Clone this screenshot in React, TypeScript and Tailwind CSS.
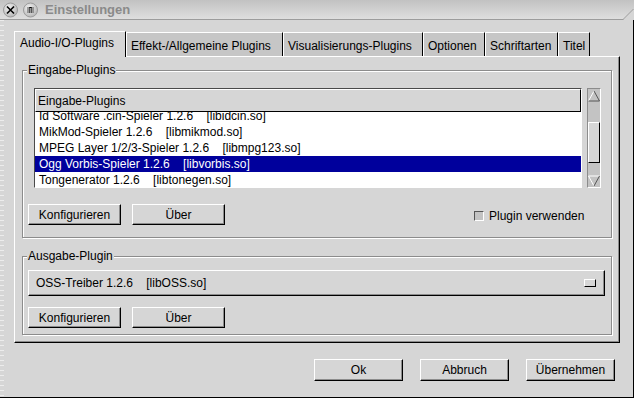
import React from "react";

const raised =
  "bg-[#d6d6d6] border-t border-l border-b border-r border-t-white border-l-white border-b-black border-r-black shadow-[inset_-1px_-1px_0_#8c8c8c]";

function Btn({ label, wide }: { label: string; wide?: boolean }) {
  return (
    <div
      className={
        (wide ? "w-[89px] h-[22px] " : "w-[93px] h-[21px] ") +
        raised +
        " flex items-center justify-center whitespace-pre"
      }
    >
      {label}
    </div>
  );
}

function Group({
  label,
  className,
  children,
}: {
  label: string;
  className: string;
  children: React.ReactNode;
}) {
  return (
    <div
      className={
        "relative w-[590px] border border-[#8c8c8c] shadow-[1px_1px_0_#ffffff,inset_1px_1px_0_#ffffff] " +
        className
      }
    >
      <span className="absolute left-[4px] top-[-8px] h-[14px] leading-[14px] bg-[#d6d6d6] px-px">
        {label}
      </span>
      {children}
    </div>
  );
}

const tabs = [
  { t: "Audio-I/O-Plugins", w: "w-[112px]", active: true },
  { t: "Effekt-/Allgemeine Plugins", w: "w-[157px]" },
  { t: "Visualisierungs-Plugins", w: "w-[140px]" },
  { t: "Optionen", w: "w-[62px]" },
  { t: "Schriftarten", w: "w-[73px]" },
  { t: "Titel", w: "w-[32px]" },
];

const rows = [
  { a: "Id Software .cin-Spieler 1.2.6", b: "[libidcin.so]" },
  { a: "MikMod-Spieler 1.2.6", b: "[libmikmod.so]" },
  { a: "MPEG Layer 1/2/3-Spieler 1.2.6", b: "[libmpg123.so]" },
  { a: "Ogg Vorbis-Spieler 1.2.6", b: "[libvorbis.so]", sel: true },
  { a: "Tongenerator 1.2.6", b: "[libtonegen.so]" },
];

export default function App() {
  return (
    <div className="w-[634px] h-[398px] bg-[#d6d6d6] flex flex-col font-['Liberation_Sans',Arial,sans-serif] text-[12px] leading-[14px] text-black overflow-hidden">
      {/* title bar */}
      <div className="relative h-[20px] flex items-center border-b border-[#9c9c9c] bg-gradient-to-b from-[#c2c2c2] to-[#dedede]">
        <svg width="40" height="19" viewBox="0 0 40 19" className="shrink-0">
          <defs>
            <radialGradient id="g" cx="0.4" cy="0.35" r="0.7">
              <stop offset="0" stopColor="#f2f2f2" />
              <stop offset="1" stopColor="#b4b4b4" />
            </radialGradient>
          </defs>
          <circle cx="10.5" cy="10" r="7" fill="url(#g)" stroke="#9a9a9a" />
          <path d="M7 6.5 L14 13.5 M14 6.5 L7 13.5" stroke="#000" strokeWidth="1.6" />
          <circle cx="30.5" cy="10" r="7" fill="url(#g)" stroke="#9a9a9a" />
          <rect x="27.5" y="7" width="6" height="6" fill="#555" />
          <path d="M28 8h1M30 8h1M32 8h1M28 10h1M30 10h1M32 10h1M28 12h1M30 12h1M32 12h1" stroke="#ddd" strokeWidth="1" />
          <rect x="29.5" y="7" width="2" height="1" fill="#000" />
        </svg>
        <span className="ml-[5px] text-[13px] font-bold text-[#8a8a8a]">Einstellungen</span>
        <svg
          width="11"
          height="11"
          viewBox="0 0 11 11"
          className="absolute right-0 bottom-[-1px]"
        >
          <polygon points="0,11 11,0 11,11" fill="#d6d6d6" />
          <line x1="0" y1="10.5" x2="10.5" y2="0" stroke="#9c9c9c" />
        </svg>
      </div>

      <div className="flex flex-1 border-r border-b border-black">
        <div className="w-[4px] bg-[repeating-linear-gradient(to_bottom,#ececec_0px,#ececec_1px,#d6d6d6_1px,#d6d6d6_5px)]" />
        <div className="flex-1 flex flex-col pl-[10px] pt-[11px]">
          {/* tabs */}
          <div className="flex h-[25px] items-start">
            {tabs.map((tb) =>
              tb.active ? (
                <div
                  key={tb.t}
                  className={
                    tb.w +
                    " relative z-10 h-[26px] bg-[#d6d6d6] border-t border-l border-r border-t-white border-l-white border-r-black pl-[5px] pt-[4px] whitespace-nowrap"
                  }
                >
                  {tb.t}
                </div>
              ) : (
                <div
                  key={tb.t}
                  className={
                    tb.w +
                    " mt-[1px] h-[24px] bg-[#c6c6c6] border-t border-l border-r border-t-white border-l-white border-r-black pl-[4px] pt-[6px] whitespace-nowrap overflow-hidden"
                  }
                >
                  {tb.t}
                </div>
              )
            )}
          </div>

          {/* panel */}
          <div className="w-[606px] h-[287px] border-t border-l border-b border-r border-t-white border-l-white border-b-black border-r-black shadow-[inset_-1px_-1px_0_#8c8c8c] pl-[7px] pt-[13px] flex flex-col">
            <Group label="Eingabe-Plugins" className="h-[168px] pl-[5px] pt-[17px]">
              <div className="flex h-[100px] ml-[6px] gap-[5px]">
                {/* list */}
                <div className="w-[548px] h-[100px] border-t border-l border-b border-r border-t-[#4a4a4a] border-l-[#4a4a4a] border-b-white border-r-white bg-white flex flex-col">
                  <div className="h-[23px] shrink-0 bg-[#d6d6d6] border-t border-l border-b border-r border-t-white border-l-white border-b-black border-r-black flex items-center pl-[2px]">
                    Eingabe-Plugins
                  </div>
                  <div className="h-[75px] overflow-hidden">
                    <div className="-mt-[4px]">
                      {rows.map((r) => (
                        <div
                          key={r.a}
                          className={
                            r.sel
                              ? "h-[16px] flex items-center pl-[4px] whitespace-pre bg-[#00009c] text-white"
                              : "h-[16px] flex items-center pl-[4px] whitespace-pre"
                          }
                        >
                          {r.a + "    " + r.b}
                        </div>
                      ))}
                    </div>
                  </div>
                </div>
                {/* scrollbar */}
                <div className="w-[14px] h-[100px] bg-[#c3c3c3] border-t border-l border-b border-r border-t-[#8c8c8c] border-l-[#8c8c8c] border-b-white border-r-white flex flex-col items-center">
                  <svg width="12" height="12" viewBox="0 0 12 12" className="mt-[1px]">
                    <line x1="0.5" y1="11" x2="6" y2="1" stroke="#ffffff" />
                    <line x1="6" y1="1" x2="11.5" y2="11" stroke="#555555" />
                    <line x1="0.5" y1="11" x2="11.5" y2="11" stroke="#555555" />
                  </svg>
                  <div className="mt-[20px] w-[12px] h-[41px] bg-[#d6d6d6] border-t border-l border-b border-r border-t-white border-l-white border-b-black border-r-black" />
                  <svg width="12" height="12" viewBox="0 0 12 12" className="mt-auto mb-[0px]">
                    <line x1="0.5" y1="1" x2="11.5" y2="1" stroke="#ffffff" />
                    <line x1="0.5" y1="1" x2="6" y2="11" stroke="#ffffff" />
                    <line x1="6" y1="11" x2="11.5" y2="1" stroke="#555555" />
                  </svg>
                </div>
              </div>
              <div className="flex items-center mt-[16px]">
                <Btn label="Konfigurieren" />
                <div className="w-[11px]" />
                <Btn label="Über" />
                <div className="ml-[249px] mt-[2px] flex items-center">
                  <div className="w-[10px] h-[10px] bg-[#c3c3c3] border-t border-l border-b border-r border-t-[#555555] border-l-[#555555] border-b-white border-r-white" />
                  <span className="ml-[5px]">Plugin verwenden</span>
                </div>
              </div>
            </Group>

            <Group label="Ausgabe-Plugin" className="mt-[18px] h-[79px] pl-[5px] pt-[13px]">
              <div className={"w-[577px] h-[26px] " + raised + " flex items-center pl-[7px] whitespace-pre"}>
                <span>{"OSS-Treiber 1.2.6    [libOSS.so]"}</span>
                <div className="ml-auto mr-[8px] w-[12px] h-[8px] bg-[#d6d6d6] border-t border-l border-b border-r border-t-white border-l-white border-b-black border-r-black" />
              </div>
              <div className="flex items-center mt-[11px]">
                <Btn label="Konfigurieren" />
                <div className="w-[11px]" />
                <Btn label="Über" />
              </div>
            </Group>
          </div>

          {/* bottom buttons */}
          <div className="flex justify-end gap-[17px] pr-[18px] mt-[16px]">
            <Btn label="Ok" wide />
            <Btn label="Abbruch" wide />
            <Btn label="Übernehmen" wide />
          </div>
        </div>
      </div>
    </div>
  );
}
